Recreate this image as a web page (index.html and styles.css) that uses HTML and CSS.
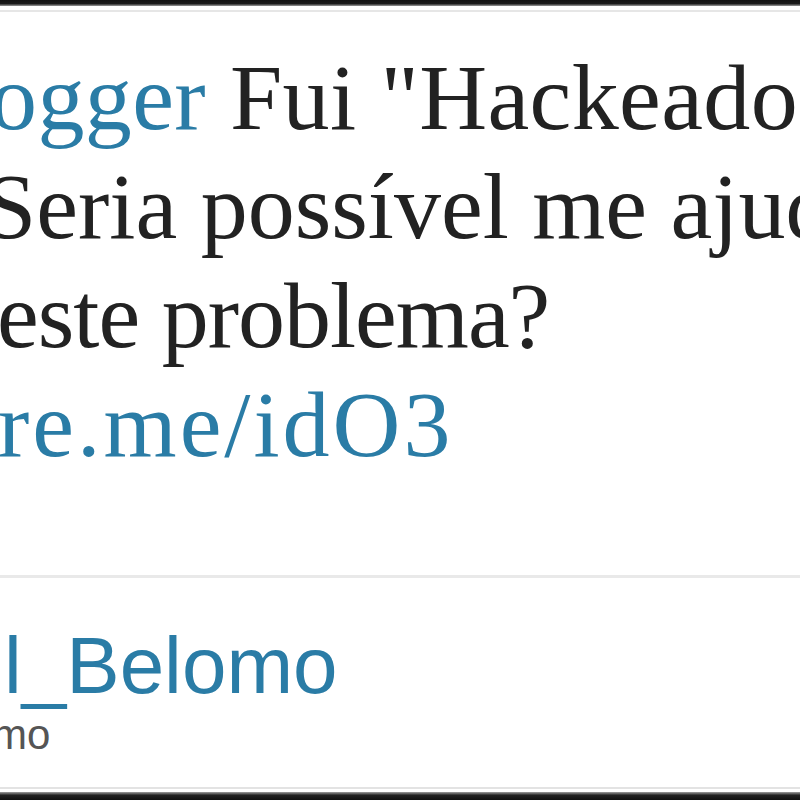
FILE: index.html
```html
<!DOCTYPE html>
<html lang="pt">
<head>
<meta charset="utf-8">
<title>Tweet</title>
<link rel="stylesheet" href="styles.css">
</head>
<body>
<div class="frame">
  <div class="edge-top"></div>
  <div class="rule-top"></div>
  <div class="tweet">
    <div class="line l1"><a class="link">ogger</a> Fui "Hackeado"</div>
    <div class="line l2">Seria possível me ajudar</div>
    <div class="line l3">este problema?</div>
    <div class="line l4"><a class="link">re.me/idO3</a></div>
  </div>
  <div class="divider"></div>
  <div class="author">
    <div class="handle">l_Belomo</div>
    <div class="name">mo</div>
  </div>
  <div class="spacer"></div>
  <div class="rule-bottom"></div>
  <div class="edge-bottom"></div>
</div>
</body>
</html>
```

FILE: styles.css
```css
html, body {
  margin: 0;
  padding: 0;
  background: #fff;
}
.frame {
  width: 800px;
  height: 800px;
  overflow: hidden;
  display: flex;
  flex-direction: column;
  background: #fff;
}
.edge-top {
  height: 6px;
  flex: none;
  background: linear-gradient(#111 0, #1a1a1a 60%, #9a9a9a 100%);
}
.rule-top {
  height: 2px;
  margin-top: 4px;
  flex: none;
  background: #e6e6e6;
}
.tweet {
  padding-top: 31px;
  font-family: "Liberation Serif", "Times New Roman", serif;
  font-size: 94px;
  line-height: 109px;
  color: #222;
  white-space: nowrap;
}
.link {
  color: #2a7ca6;
  text-decoration: none;
}
.l1 { margin-left: -10px; letter-spacing: 0.4px; }
.l2 { margin-left: -16px; }
.l3 { margin-left: -3px; letter-spacing: -1px; }
.l4 { margin-left: -2px; letter-spacing: 3px; }
.divider {
  flex: none;
  height: 3px;
  margin-top: 96px;
  background: #e9e9e9;
}
.author {
  padding-top: 48px;
  font-family: "Liberation Sans", Arial, sans-serif;
  white-space: nowrap;
}
.handle {
  font-size: 80px;
  line-height: 80px;
  color: #2a7ca6;
  margin-left: 4px;
}
.name {
  margin-top: 8px;
  font-size: 42px;
  line-height: 42px;
  color: #555;
  margin-left: -8px;
}
.spacer {
  flex: 1;
}
.rule-bottom {
  flex: none;
  height: 2px;
  background: #e3e3e3;
  margin-bottom: 3px;
}
.edge-bottom {
  flex: none;
  height: 8px;
  background: linear-gradient(#a0a0a0 0, #222 40%, #111 100%);
}
```
